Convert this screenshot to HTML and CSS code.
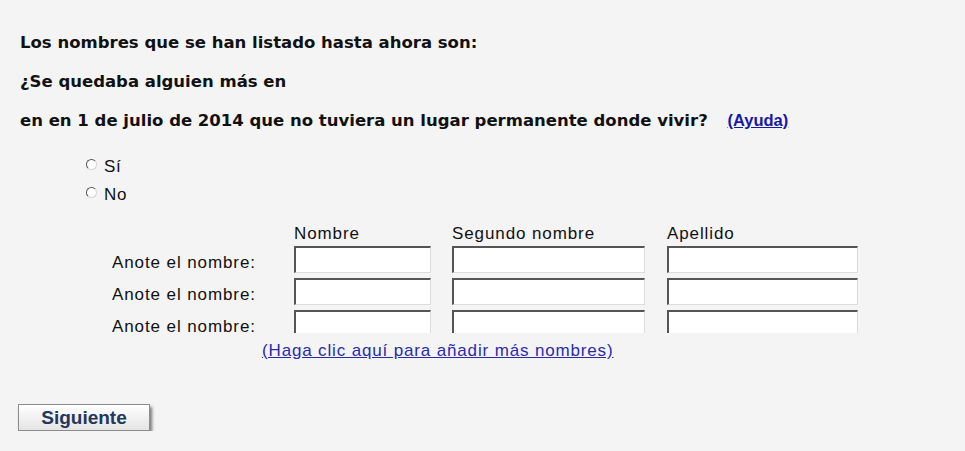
FILE: index.html
```html
<!DOCTYPE html>
<html lang="es">
<head>
    <meta charset="UTF-8">
    <meta name="viewport" content="width=device-width, initial-scale=1.0">
    <title>Nombres</title>
    <link rel="stylesheet" href="styles.css">
</head>
<body>

    <div class="page">
        <p class="question">Los nombres que se han listado hasta ahora son:</p>
        <p class="question">¿Se quedaba alguien más en</p>
        <p class="question">en en 1 de julio de 2014 que no tuviera un lugar permanente donde vivir? <a href="#" class="help">(Ayuda)</a></p>

        <div class="options">
            <label class="option"><input type="radio" name="nmOtro" value="si"> Sí</label>
            <label class="option"><input type="radio" name="nmOtro" value="no"> No</label>
        </div>

        <div class="names">
            <span></span>
            <span class="colHead">Nombre</span>
            <span class="colHead">Segundo nombre</span>
            <span class="colHead">Apellido</span>

            <span class="rowLabel">Anote el nombre:</span>
            <input class="field first" type="text">
            <input class="field middle" type="text">
            <input class="field last" type="text">

            <span class="rowLabel">Anote el nombre:</span>
            <input class="field first" type="text">
            <input class="field middle" type="text">
            <input class="field last" type="text">

            <span class="rowLabel">Anote el nombre:</span>
            <input class="field first cut" type="text">
            <input class="field middle cut" type="text">
            <input class="field last cut" type="text">
        </div>

        <a href="#" class="more">(Haga clic aquí para añadir más nombres)</a>

        <div class="buttonContainer">
            <input class="button" type="button" value="Siguiente">
        </div>
    </div>

</body>
</html>
```

FILE: styles.css
```css
body {
    margin: 0;
    background-color: #f4f4f4;
    color: #111;
    font-family: "Liberation Sans", Arial, sans-serif;
}

.page {
    padding: 23px 0 0 20px;
}

.question {
    margin: 0;
    font-family: "DejaVu Sans", Verdana, sans-serif;
    font-weight: bold;
    font-size: 16.5px;
    line-height: 39px;
}

.help {
    margin-left: 14px;
    font-family: "Liberation Sans", Arial, sans-serif;
    font-size: 16.5px;
    color: #1818a8;
}

.options {
    margin-top: 13px;
    padding-left: 66px;
}

.option {
    display: flex;
    align-items: center;
    height: 28px;
    font-size: 17px;
    letter-spacing: 0.6px;
}

.option input {
    appearance: none;
    box-sizing: border-box;
    width: 11px;
    height: 11px;
    margin: -6px 7px 0 0;
    border: 1.5px solid;
    border-color: #555 #d4d4d4 #d4d4d4 #555;
    border-radius: 50%;
    background-color: #fff;
}

.names {
    display: grid;
    grid-template-columns: 182px 158px 215px 191px;
    grid-template-rows: 16px 27px 27px 23px;
    row-gap: 5px;
    margin: 16px 0 0 92px;
    font-size: 17px;
    letter-spacing: 0.9px;
}

.colHead {
    line-height: 18px;
}

.rowLabel {
    align-self: start;
    margin-top: 7px;
    line-height: 20px;
}

.field {
    box-sizing: border-box;
    height: 27px;
    margin: 0;
    background-color: #fff;
    border-top: 2px solid #555;
    border-left: 2px solid #555;
    border-right: 1px solid #dcdcdc;
    border-bottom: 1px solid #dcdcdc;
}

.field.cut {
    height: 23px;
    border-bottom: none;
}

.first {
    width: 137px;
}

.middle {
    width: 193px;
}

.last {
    width: 191px;
}

.more {
    display: inline-block;
    margin: 8px 0 0 242px;
    line-height: 20px;
    font-size: 17px;
    letter-spacing: 0.85px;
    color: #2a2ab0;
}

.buttonContainer {
    margin-top: 43px;
    margin-left: -2px;
}

.button {
    width: 132px;
    height: 27px;
    padding: 0;
    background: linear-gradient(#ffffff, #e4e4e4);
    border: 1px solid #8c8c8c;
    box-shadow: 2px 3px 3px rgba(0, 0, 0, 0.5);
    font-family: "Liberation Sans", Arial, sans-serif;
    font-weight: bold;
    font-size: 19px;
    color: #23375e;
    cursor: pointer;
}
```
